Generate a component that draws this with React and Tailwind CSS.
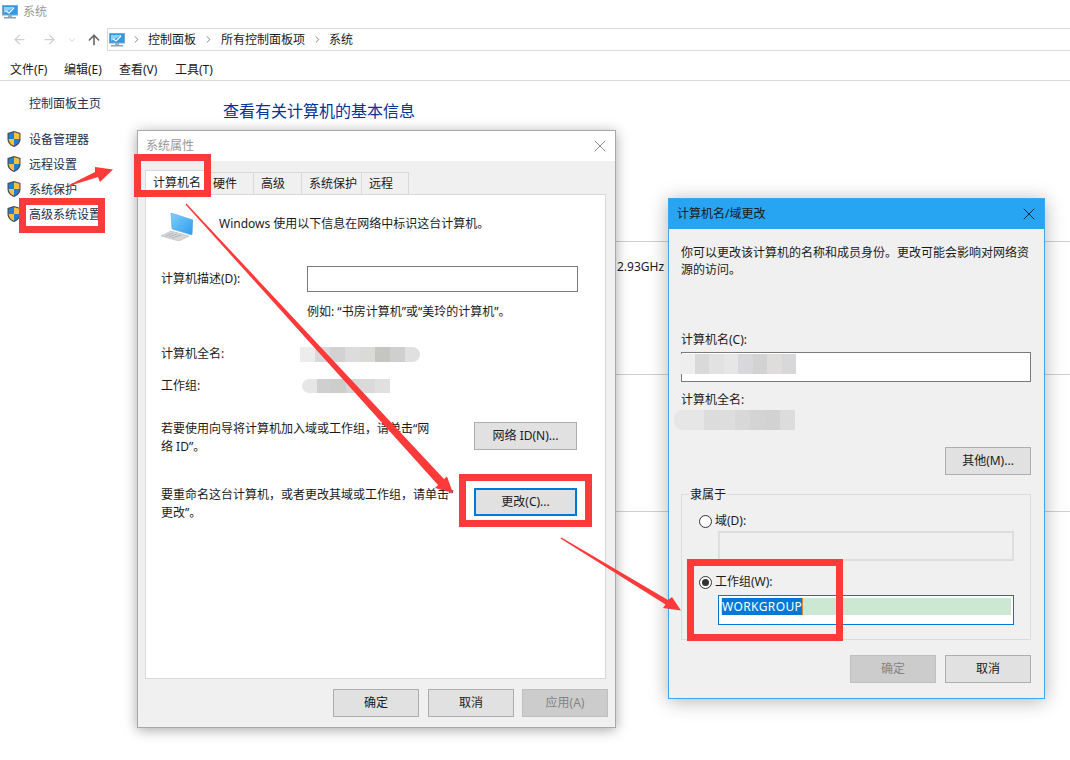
import React from 'react';
import { ArrowLeft, ArrowRight, ArrowUp, ChevronDown, ChevronRight, X } from 'lucide-react';

const Shield = () => (
  <svg width="16" height="18" viewBox="0 0 16 18" className="mt-[-2px] shrink-0">
    <path d="M8 1 L14.5 3 V9 C14.5 13 11.5 15.8 8 17 C4.5 15.8 1.5 13 1.5 9 V3 Z" fill="#4a4a4a" />
    <path d="M8 2.2 V9 H2.6 V3.8 Z" fill="#1f7fd6" />
    <path d="M8 2.2 L13.4 3.8 V9 H8 Z" fill="#f5c33b" />
    <path d="M2.6 9 H8 V15.8 C5 14.6 2.8 12.4 2.6 9 Z" fill="#f5c33b" />
    <path d="M8 9 H13.4 C13.2 12.4 11 14.6 8 15.8 Z" fill="#1f7fd6" />
  </svg>
);

const MonitorIcon = () => (
  <svg width="16" height="14" viewBox="0 0 16 14" className="shrink-0">
    <rect x="0.5" y="0.5" width="15" height="9.5" fill="#2f9be8" stroke="#7fa8c8" />
    <path d="M2 2 H13 L2 8 Z" fill="#8fd0f7" />
    <path d="M4 6 L7 8 L12 3" fill="none" stroke="#fff" strokeWidth="1.2" />
    <rect x="6" y="10" width="4" height="2" fill="#9ab0c0" />
    <rect x="2" y="12" width="12" height="1.5" fill="#8aa0b4" />
  </svg>
);

const ComputerIcon = () => (
  <svg width="32" height="28" viewBox="0 0 32 28" className="shrink-0">
    <defs>
      <linearGradient id="screen" x1="0" y1="0" x2="1" y2="1">
        <stop offset="0" stopColor="#7fd0fa" />
        <stop offset="1" stopColor="#2a9bec" />
      </linearGradient>
    </defs>
    <polygon points="10,0 32,7 31,22 11,16" fill="url(#screen)" stroke="#5aa8d8" strokeWidth="0.6" />
    <polygon points="0,23 10,18 28,23 18,28" fill="#d4d6d8" stroke="#b8bbbd" strokeWidth="0.6" />
    <path d="M5 23 L12 20 M8 24 L16 21 M11 25 L20 22" stroke="#a9acae" strokeWidth="0.8" />
  </svg>
);

const Blur = ({ colors, className = '' }) => (
  <div className={`flex ${className}`}>
    {colors.map((c, i) => (
      <div key={i} className="h-full flex-1" style={{ backgroundColor: c }}></div>
    ))}
  </div>
);

const Button = ({ children, variant = 'normal', className = '' }) => {
  const styles = {
    normal: 'border border-[#adadad] bg-[#e1e1e1] text-[#1a1a1a]',
    focused: 'border-2 border-[#0078d7] bg-[#e1e1e1] text-[#1a1a1a]',
    disabled: 'border border-[#bfbfbf] bg-[#cccccc] text-[#838383]',
  };
  return (
    <div className={`flex h-[28px] shrink-0 items-center justify-center text-xs ${styles[variant]} ${className}`}>
      {children}
    </div>
  );
};

const Radio = ({ checked }) => (
  <div className="flex h-[13px] w-[13px] items-center justify-center rounded-full border border-[#333] bg-white">
    {checked && <div className="h-[7px] w-[7px] rounded-full bg-[#333]"></div>}
  </div>
);

const RedBox = ({ className }) => (
  <div className={`absolute border-[7px] border-[#fd3a3a] ${className}`}></div>
);

const sideLinks = ['设备管理器', '远程设置', '系统保护', '高级系统设置'];
const tabs = [
  { label: '硬件', cls: 'w-[45px] pl-[4px]' },
  { label: '高级', cls: 'w-[48px] pl-[7px]' },
  { label: '系统保护', cls: 'w-[60px] pl-[7px]' },
  { label: '远程', cls: 'w-[47px] pl-[7px]' },
];

const BackgroundWindow = () => (
  <div className="flex h-full flex-col">
    <div className="flex h-[24px] items-center gap-[5px] pl-[2px] text-xs text-[#999]">
      <MonitorIcon />
      <span>系统</span>
    </div>
    <div className="mt-[4px] flex h-[23px] items-center">
      <ArrowLeft size={15} strokeWidth={2} className="ml-[12px] text-[#cfcfcf]" />
      <ArrowRight size={15} strokeWidth={2} className="ml-[15px] text-[#cfcfcf]" />
      <ChevronDown size={10} strokeWidth={2} className="ml-[10px] text-[#cfcfcf]" />
      <ArrowUp size={16} strokeWidth={2.4} className="ml-[9px] text-[#666]" />
      <div className="ml-[5px] flex h-[23px] flex-1 items-center border border-r-0 border-[#d9d9d9] pl-[1px] text-xs text-[#1a1a1a]">
        <MonitorIcon />
        <ChevronRight size={11} strokeWidth={2} className="ml-[6px] text-[#777]" />
        <span className="ml-[6px]">控制面板</span>
        <ChevronRight size={11} strokeWidth={2} className="ml-[7px] text-[#777]" />
        <span className="ml-[7px]">所有控制面板项</span>
        <ChevronRight size={11} strokeWidth={2} className="ml-[7px] text-[#777]" />
        <span className="ml-[6px]">系统</span>
      </div>
    </div>
    <div className="mt-[9px] flex h-[21px] items-start border-b border-[#d9d9d9] pl-[10px] text-xs leading-[20px] text-[#1a1a1a]">
      <span className="w-[54px]">文件(F)</span>
      <span className="w-[55px]">编辑(E)</span>
      <span className="w-[56px]">查看(V)</span>
      <span>工具(T)</span>
    </div>
    <div className="flex flex-1">
      <div className="w-[223px] shrink-0 pl-[6px] pt-[14px] text-xs leading-[18px] text-[#222f4f]">
        <div className="pl-[23px]">控制面板主页</div>
        <div className="mt-[18px] flex flex-col gap-[7px]">
          {sideLinks.map((link) => (
            <div key={link} className="flex h-[18px] items-center gap-[7px]">
              <Shield />
              <span>{link}</span>
            </div>
          ))}
        </div>
      </div>
      <div className="flex-1">
        <h1 className="mt-[19px] text-base leading-[22px] text-[#003399]">查看有关计算机的基本信息</h1>
        <div className="mt-[119px] border-t border-[#d0d0d0]"></div>
        <div className="mt-[16px] pl-[394px] text-xs leading-[18px] text-[#1a1a1a]">2.93GHz</div>
        <div className="mt-[98px] border-t border-[#d0d0d0]"></div>
        <div className="mt-[136px] border-t border-[#d0d0d0]"></div>
      </div>
    </div>
  </div>
);

const SystemProperties = () => (
  <div className="absolute left-[137px] top-[130px] flex h-[598px] w-[479px] flex-col border border-[#a8a8a8] bg-[#f0f0f0] text-xs text-[#1a1a1a] shadow-[0_2px_12px_rgba(0,0,0,0.35)]">
    <div className="flex h-[30px] items-center justify-between bg-white pl-[8px] pr-[5px] text-[#999]">
      <span>系统属性</span>
      <X size={20} strokeWidth={1} className="text-[#777]" />
    </div>
    <div className="flex h-[33px] items-end pl-[7px]">
      <div className="flex h-[24px] w-[64px] items-center justify-center border border-b-0 border-[#d9d9d9] bg-white">计算机名</div>
      {tabs.map((tab) => (
        <div key={tab.label} className={`flex h-[22px] items-center border border-b-0 border-l-0 border-[#d9d9d9] ${tab.cls}`}>
          {tab.label}
        </div>
      ))}
    </div>
    <div className="ml-[7px] h-[485px] w-[461px] border border-[#d9d9d9] bg-white px-[15px] pt-[18px]">
      <div className="flex h-[28px] items-start gap-[26px]">
        <ComputerIcon />
        <span className="mt-[3px]">Windows 使用以下信息在网络中标识这台计算机。</span>
      </div>
      <div className="mt-[25px] flex h-[26px] items-center">
        <span className="w-[146px]">计算机描述(D):</span>
        <div className="h-[26px] w-[271px] border border-[#7a7a7a]"></div>
      </div>
      <div className="mt-[11px] pl-[146px] leading-[17px]">例如: “书房计算机”或“美玲的计算机”。</div>
      <div className="mt-[25px] flex h-[18px] items-center">
        <span className="w-[139px]">计算机全名:</span>
        <Blur className="h-[15px] w-[120px] overflow-hidden rounded-r-lg" colors={['#ececec', '#d9d9d9', '#d2d2d2', '#dcdcdc', '#dadad7', '#c6c5c2', '#cfcfcf', '#e0e0e0']} />
      </div>
      <div className="mt-[14px] flex h-[18px] items-center">
        <span className="w-[141px]">工作组:</span>
        <Blur className="h-[14px] w-[88px] overflow-hidden rounded-l-lg" colors={['#e6e6e6', '#cfcfcf', '#cdcdca', '#d8d8d8', '#dadada', '#e0e0e0']} />
      </div>
      <div className="mt-[25px] flex justify-between pr-[13px]">
        <div className="leading-[18px]">若要使用向导将计算机加入域或工作组，请单击“网<br />络 ID”。</div>
        <Button className="mt-[2px] w-[103px]">网络 ID(N)...</Button>
      </div>
      <div className="mt-[30px] flex justify-between pr-[13px]">
        <div className="leading-[18px]">要重命名这台计算机，或者更改其域或工作组，请单击“<br />更改”。</div>
        <Button variant="focused" className="mt-[2px] w-[103px]">更改(C)...</Button>
      </div>
    </div>
    <div className="mt-[10px] flex justify-end gap-[9px] pr-[7px]">
      <Button className="w-[86px]">确定</Button>
      <Button className="w-[86px]">取消</Button>
      <Button variant="disabled" className="ml-[-1px] w-[86px]">应用(A)</Button>
    </div>
  </div>
);

const ComputerNameChanges = () => (
  <div className="absolute left-[668px] top-[198px] flex h-[501px] w-[377px] flex-col border border-[#3aa7ee] bg-[#f0f0f0] text-xs text-[#1a1a1a] shadow-[0_2px_18px_rgba(0,0,0,0.3)]">
    <div className="flex h-[30px] shrink-0 items-center justify-between bg-[#27a4f2] pl-[8px] pr-[5px]">
      <span>计算机名/域更改</span>
      <X size={20} strokeWidth={1.1} />
    </div>
    <div className="flex flex-1 flex-col pl-[12px] pr-[13px]">
      <p className="mt-[15px] leading-[17px]">你可以更改该计算机的名称和成员身份。更改可能会影响对网络资<br />源的访问。</p>
      <div className="mt-[53px] leading-[17px]">计算机名(C):</div>
      <div className="relative mt-[4px] h-[30px] border border-[#7a7a7a] bg-white">
        <Blur className="absolute left-[-2px] top-[1px] h-[20px] w-[116px]" colors={['#eeeeee', '#d9d9d9', '#e2e2e2', '#e6e6e6', '#d8d8dc', '#d2d2d2', '#dedddb', '#d8d8da']} />
      </div>
      <div className="mt-[9px] leading-[17px]">计算机全名:</div>
      <Blur className="ml-[-7px] mt-[2px] h-[20px] w-[121px] overflow-hidden rounded-l-lg" colors={['#e6e6e6', '#e6e6e6', '#dcdcdc', '#dddddd', '#d8d8d8', '#d4d4d4', '#d2d2d2', '#dcdcdc']} />
      <div className="mt-[17px] flex justify-end">
        <Button className="w-[86px]">其他(M)...</Button>
      </div>
      <fieldset className="mt-[11px] h-[154px] border border-[#dcdcdc] pl-[17px] pr-[16px]">
        <legend className="ml-[-10px] px-[1px] leading-[17px]">隶属于</legend>
        <div className="mt-[9px] flex h-[18px] items-center gap-[3px]">
          <Radio />
          <span>域(D):</span>
        </div>
        <div className="ml-[19px] mt-[1px] h-[30px] border-2 border-[#dedede]"></div>
        <div className="mt-[12px] flex h-[18px] items-center gap-[3px]">
          <Radio checked />
          <span>工作组(W):</span>
        </div>
        <div className="ml-[19px] mt-[4px] h-[30px] border border-[#0078d7] bg-white p-[2px]">
          <div className="flex h-[17px] bg-[#cde8d2] pl-[1px]">
            <span className="border-r border-[#e08a2e] bg-[#0078d7] leading-[17px] tracking-[0.4px] text-white">WORKGROUP</span>
          </div>
        </div>
      </fieldset>
      <div className="mt-[15px] flex justify-end gap-[9px]">
        <Button variant="disabled" className="w-[86px]">确定</Button>
        <Button className="w-[86px]">取消</Button>
      </div>
    </div>
  </div>
);

const Arrows = () => (
  <svg width="1070" height="760" viewBox="0 0 1070 760" className="pointer-events-none absolute left-0 top-0">
    <polygon points="53,191 54,192.5 95,172 95,167 113,169.5 100,182 98,177" fill="#fd3a3a" />
    <polygon points="186.5,203.5 444,479 447,476.5 453,493 435,488 438,485 185.5,204.5" fill="#fd3a3a" />
    <polygon points="561.5,537.5 668,600 672,597 681,610.5 663,608 665.5,604.5 560.5,538.5" fill="#fd3a3a" />
  </svg>
);

const App = () => {
  return (
    <div className="relative h-[760px] w-[1070px] overflow-hidden bg-white font-['Noto_Sans','Noto_Sans_CJK_SC',sans-serif]">
      <BackgroundWindow />
      <SystemProperties />
      <ComputerNameChanges />
      <RedBox className="left-[134px] top-[154px] h-[43px] w-[77px]" />
      <RedBox className="left-[19px] top-[198px] h-[35px] w-[86px]" />
      <RedBox className="left-[459px] top-[474px] h-[53px] w-[133px]" />
      <RedBox className="left-[687px] top-[559px] h-[82px] w-[156px]" />
      <Arrows />
    </div>
  );
};

export default App;
